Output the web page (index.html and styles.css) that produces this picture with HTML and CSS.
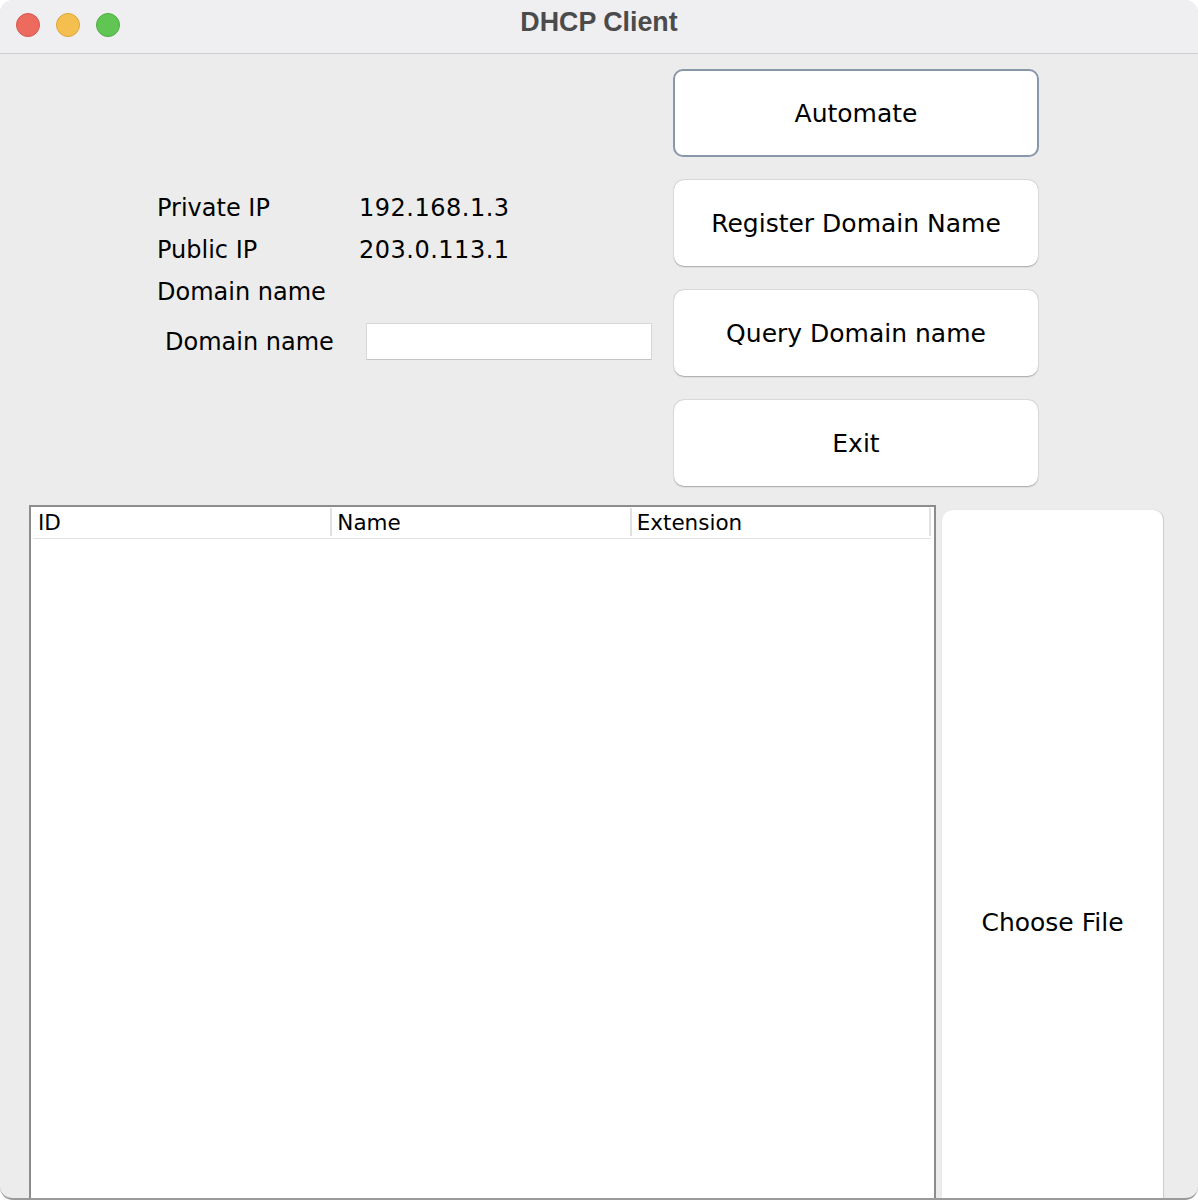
FILE: index.html
```html
<!DOCTYPE html>
<html>
<head>
<meta charset="utf-8">
<title>DHCP Client</title>
<link rel="stylesheet" href="styles.css">
</head>
<body>
<div class="window">
  <div class="titlebar">
    <div class="lights">
      <span class="light red"></span>
      <span class="light yellow"></span>
      <span class="light green"></span>
    </div>
    <div class="title">DHCP Client</div>
  </div>
  <div class="content">
    <div class="top">
      <div class="info">
        <div class="rows">
          <div class="label">Private IP</div><div class="value">192.168.1.3</div>
          <div class="label">Public IP</div><div class="value">203.0.113.1</div>
          <div class="label">Domain name</div><div class="value"></div>
        </div>
        <div class="entry">
          <span class="entry-label">Domain name</span>
          <input class="field" type="text">
        </div>
      </div>
      <div class="buttons">
        <div class="btn focused">Automate</div>
        <div class="btn">Register Domain Name</div>
        <div class="btn">Query Domain name</div>
        <div class="btn">Exit</div>
      </div>
    </div>
    <div class="bottom">
      <div class="table">
        <div class="thead">
          <div class="th">ID</div>
          <div class="th">Name</div>
          <div class="th">Extension</div>
        </div>
        <div class="tbody"></div>
      </div>
      <div class="choose">Choose File</div>
    </div>
  </div>
</div>
</body>
</html>
```
FILE: styles.css
```css
* { box-sizing: border-box; }
html, body { margin: 0; padding: 0; background: #ffffff; }
body {
  width: 1198px;
  height: 1200px;
  overflow: hidden;
  font-family: "DejaVu Sans", "Liberation Sans", sans-serif;
  color: #000;
}
.window {
  width: 1198px;
  height: 1200px;
  border-radius: 13px;
  overflow: hidden;
  background: #ececec;
  display: flex;
  flex-direction: column;
  border-bottom: 2px solid #9a9a9a;
}
.titlebar {
  height: 54px;
  flex: none;
  background: #efeff2;
  border-bottom: 1px solid #cfcfcf;
  display: flex;
  align-items: center;
  justify-content: center;
  position: relative;
}
.lights {
  position: absolute;
  left: 16px;
  top: 13px;
  display: flex;
  gap: 16px;
}
.light {
  width: 24px;
  height: 24px;
  border-radius: 50%;
  display: block;
}
.red { background: #ec6a5e; border: 1px solid #d4574c; }
.yellow { background: #f5bf4f; border: 1px solid #d9a43c; }
.green { background: #61c554; border: 1px solid #4fab43; }
.title {
  font-family: "Liberation Sans", "Roboto", sans-serif;
  font-weight: bold;
  font-size: 26.8px;
  color: #4b4b4b;
  margin-top: -9px;
}
.content {
  flex: 1;
  display: flex;
  flex-direction: column;
  padding-top: 15px;
  min-height: 0;
}
.top {
  display: flex;
  height: 436px;
  flex: none;
}
.info {
  width: 673px;
  padding-top: 118px;
  padding-left: 157px;
}
.rows {
  display: grid;
  grid-template-columns: 202px auto;
  grid-auto-rows: 42px;
  align-items: center;
  font-size: 24px;
}
.value { white-space: nowrap; letter-spacing: 0.5px; }
.entry {
  display: flex;
  align-items: center;
  margin-top: 10px;
  padding-left: 8px;
  font-size: 24px;
}
.entry-label { width: 201px; }
.field {
  width: 286px;
  height: 37px;
  border: 1px solid #d8d8d8;
  border-bottom-color: #c4c4c4;
  background: #fff;
  margin: 0;
  padding: 0;
  outline: none;
}
.buttons {
  width: 366px;
  display: flex;
  flex-direction: column;
  gap: 24px;
}
.btn {
  height: 86px;
  margin: 0 1px;
  background: #fff;
  border-radius: 10px;
  box-shadow: 0 0.5px 1.5px rgba(0,0,0,0.28), 0 0 0 0.5px rgba(0,0,0,0.06);
  display: flex;
  align-items: center;
  justify-content: center;
  font-size: 25px;
}
.btn.focused {
  height: 88px;
  margin: 0 0 -1px 0;
  border: 2px solid #8997ab;
  box-shadow: none;
}
.bottom {
  flex: 1;
  display: flex;
  padding-left: 29px;
  min-height: 0;
}
.table {
  width: 907px;
  border: 2px solid #8c8c8c;
  border-bottom: none;
  background: #fff;
  display: flex;
  flex-direction: column;
  padding: 0 3px 0 2px;
}
.thead {
  display: flex;
  height: 32px;
  border-bottom: 1px solid #e2e2e2;
  flex: none;
}
.th {
  width: 300px;
  height: 28px;
  display: flex;
  align-items: center;
  padding-left: 5px;
  font-size: 21.5px;
  border-right: 2px solid #e0e0e0;
  margin-top: 1px;
}
.tbody { flex: 1; }
.choose {
  width: 222px;
  height: 824px;
  flex: none;
  margin-left: 6px;
  margin-top: 5px;
  background: #fff;
  border-radius: 10px;
  border-right: 1px solid #cfcfcf;
  box-shadow: 0 0 1px rgba(0,0,0,0.15);
  display: flex;
  align-items: center;
  justify-content: center;
  font-size: 25px;
}
```
